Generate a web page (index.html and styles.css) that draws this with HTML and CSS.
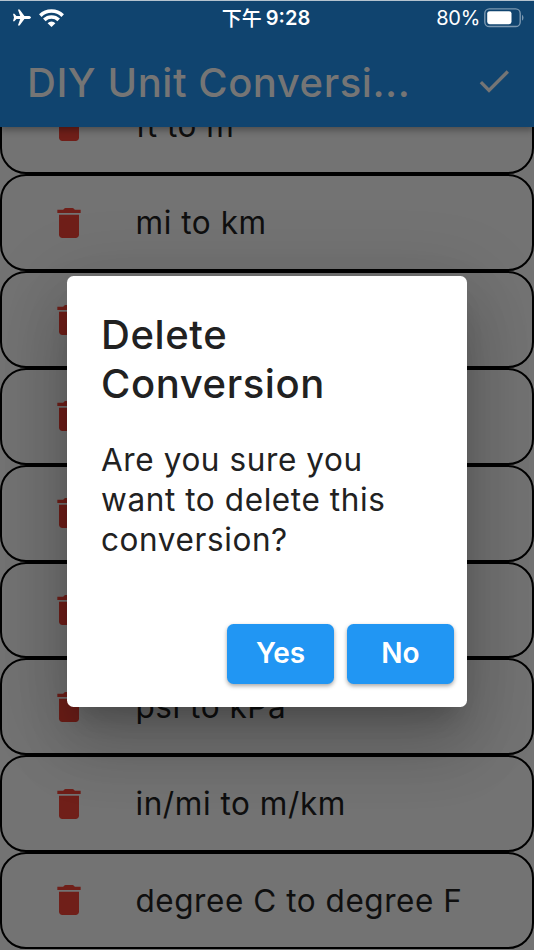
FILE: index.html
```html
<!DOCTYPE html>
<html lang="en">
<head>
<meta charset="utf-8">
<title>DIY Unit Conversion</title>
<link rel="stylesheet" href="styles.css">
</head>
<body>
<svg class="defs" width="0" height="0">
  <symbol id="trash" viewBox="0 0 24 24"><path d="M6 19c0 1.1.9 2 2 2h8c1.1 0 2-.9 2-2V7H6v12zM19 4h-3.5l-.7-.7a1 1 0 0 0-.7-.3H9.9a1 1 0 0 0-.7.3l-.7.7H5v2h14V4z"/></symbol>
</svg>
<div class="app">
  <header class="header">
    <div class="status">
      <div class="status-left">
        <svg class="plane" viewBox="0 0 18 17"><path d="M18 8.5c0-.9-1.2-1.5-2.6-1.5h-4L6.6.4H4.9L7.2 7H3.4L1.4 4.7H0l1 3.8-1 3.8h1.4L3.4 10h3.8l-2.3 6.6h1.7L11.4 10h4c1.4 0 2.6-.6 2.6-1.5z"/></svg>
        <svg class="wifi" viewBox="0 0 25 18"><g fill="none" stroke="#fff" stroke-width="3.6"><path d="M1.3 6.6a16 16 0 0 1 22.4 0"/><path d="M5.3 10.9a10.3 10.3 0 0 1 14.4 0"/></g><path fill="#fff" d="M8.6 14.2a5.6 5.6 0 0 1 7.8 0L12.5 18z"/></svg>
      </div>
      <div class="clock"><span class="ampm">下午</span><span class="time">9:28</span></div>
      <div class="status-right">
        <span class="percent">80%</span>
        <svg class="battery" viewBox="0 0 40 20"><rect x=".8" y=".9" width="35.4" height="17.6" rx="4.6" fill="none" stroke="#7b98b1" stroke-width="1.4"/><rect x="3.2" y="3.2" width="24.3" height="13" rx="2.4" fill="#fff"/><path d="M38 6.7q1.5.8 1.5 3t-1.5 3z" fill="#7b98b1"/></svg>
      </div>
    </div>
    <div class="toolbar">
      <h1 class="title">DIY Unit Conversi...</h1>
      <svg class="check" viewBox="0 0 24 24"><path d="M9 16.17 4.83 12l-1.42 1.41L9 19 21 7l-1.41-1.41z"/></svg>
    </div>
  </header>
  <main class="list">
    <div class="row"><svg class="trash"><use href="#trash"/></svg><span class="label">ft to m</span></div>
    <div class="row"><svg class="trash"><use href="#trash"/></svg><span class="label">mi to km</span></div>
    <div class="row"><svg class="trash"><use href="#trash"/></svg></div>
    <div class="row"><svg class="trash"><use href="#trash"/></svg></div>
    <div class="row"><svg class="trash"><use href="#trash"/></svg></div>
    <div class="row"><svg class="trash"><use href="#trash"/></svg></div>
    <div class="row"><svg class="trash"><use href="#trash"/></svg><span class="label">psi to kPa</span></div>
    <div class="row"><svg class="trash"><use href="#trash"/></svg><span class="label">in/mi to m/km</span></div>
    <div class="row"><svg class="trash"><use href="#trash"/></svg><span class="label">degree C to degree F</span></div>
  </main>
  <section class="dialog" role="dialog">
    <h2 class="dialog-title">Delete<br>Conversion</h2>
    <p class="message">Are you sure you<br>want to delete this<br>conversion?</p>
    <div class="actions">
      <button class="button">Yes</button>
      <button class="button">No</button>
    </div>
  </section>
</div>
</body>
</html>
```
FILE: styles.css
```css
* { box-sizing: border-box; }
body { margin: 0; font-family: Inter, "Noto Sans CJK TC", sans-serif; }
h1, h2, p { margin: 0; }
.defs { position: absolute; }
.app {
  position: relative;
  width: 534px;
  height: 950px;
  overflow: hidden;
  display: flex;
  flex-direction: column;
  background: #737373;
}
.header {
  position: relative;
  flex: none;
  height: 127.4px;
  background: #10446f;
  border-top: 1px solid #b5c3cf;
  box-shadow: 0 3px 7px rgba(0, 0, 0, .34);
}
.status {
  height: 33px;
  display: grid;
  grid-template-columns: 1fr auto 1fr;
  align-items: center;
  padding: 0 10px 0 13px;
  color: #fff;
}
.status-left, .status-right, .clock { display: flex; align-items: center; }
.status-left { gap: 8px; }
.status-right { justify-content: flex-end; gap: 4px; }
.plane { width: 18px; height: 17px; fill: #fff; }
.wifi { width: 25px; height: 18px; }
.battery { width: 40px; height: 20px; }
.clock { font-size: 20px; font-weight: 600; margin-right: 5px; }
.ampm { font-family: "Noto Sans CJK TC", sans-serif; font-weight: 500; line-height: 30px; margin-right: 4px; }
.percent { font-size: 20px; letter-spacing: -.3px; }
.toolbar {
  height: 94px;
  display: flex;
  align-items: center;
  justify-content: space-between;
  padding: 0 20px 0 27px;
}
.title { padding-top: 2px; font-size: 40px; font-weight: 500; letter-spacing: .55px; color: #757575; white-space: nowrap; }
.check { width: 40px; height: 40px; fill: #757575; }
.list {
  flex: 1;
  min-height: 0;
  overflow: hidden;
  display: flex;
  flex-direction: column;
  justify-content: flex-end;
  padding-bottom: 1.3px;
}
.row {
  flex: none;
  height: 96.8px;
  display: flex;
  align-items: center;
  gap: 47px;
  padding-left: 46.5px;
  border: 2px solid #000;
  border-radius: 26px;
}
.trash { flex: none; width: 40px; height: 40px; fill: #701f19; }
.label { font-size: 31.5px; letter-spacing: .55px; color: #0f0f0f; white-space: nowrap; }
.dialog {
  position: absolute;
  left: 67px;
  top: 276px;
  width: 400px;
  height: 431px;
  display: flex;
  flex-direction: column;
  padding: 35px 13px 23px 34px;
  background: #fff;
  border-radius: 6.5px;
  color: #212121;
  box-shadow: 0 18px 25px -12px rgba(0, 0, 0, .2), 0 40px 63px 5px rgba(0, 0, 0, .14), 0 15px 77px 13px rgba(0, 0, 0, .12);
}
.dialog-title { font-size: 40px; line-height: 48.5px; font-weight: 500; letter-spacing: .6px; }
.message { margin-top: 32px; font-size: 31.5px; line-height: 40px; letter-spacing: .6px; white-space: nowrap; }
.actions { margin-top: auto; display: flex; justify-content: flex-end; gap: 13px; }
.button {
  width: 107px;
  height: 60px;
  padding: 0 0 3px;
  border: 0;
  border-radius: 6.5px;
  background: #2196f3;
  color: #fff;
  font: 600 28px Inter, sans-serif;
  box-shadow: 0 2px 4px rgba(0, 0, 0, .35);
}
```
